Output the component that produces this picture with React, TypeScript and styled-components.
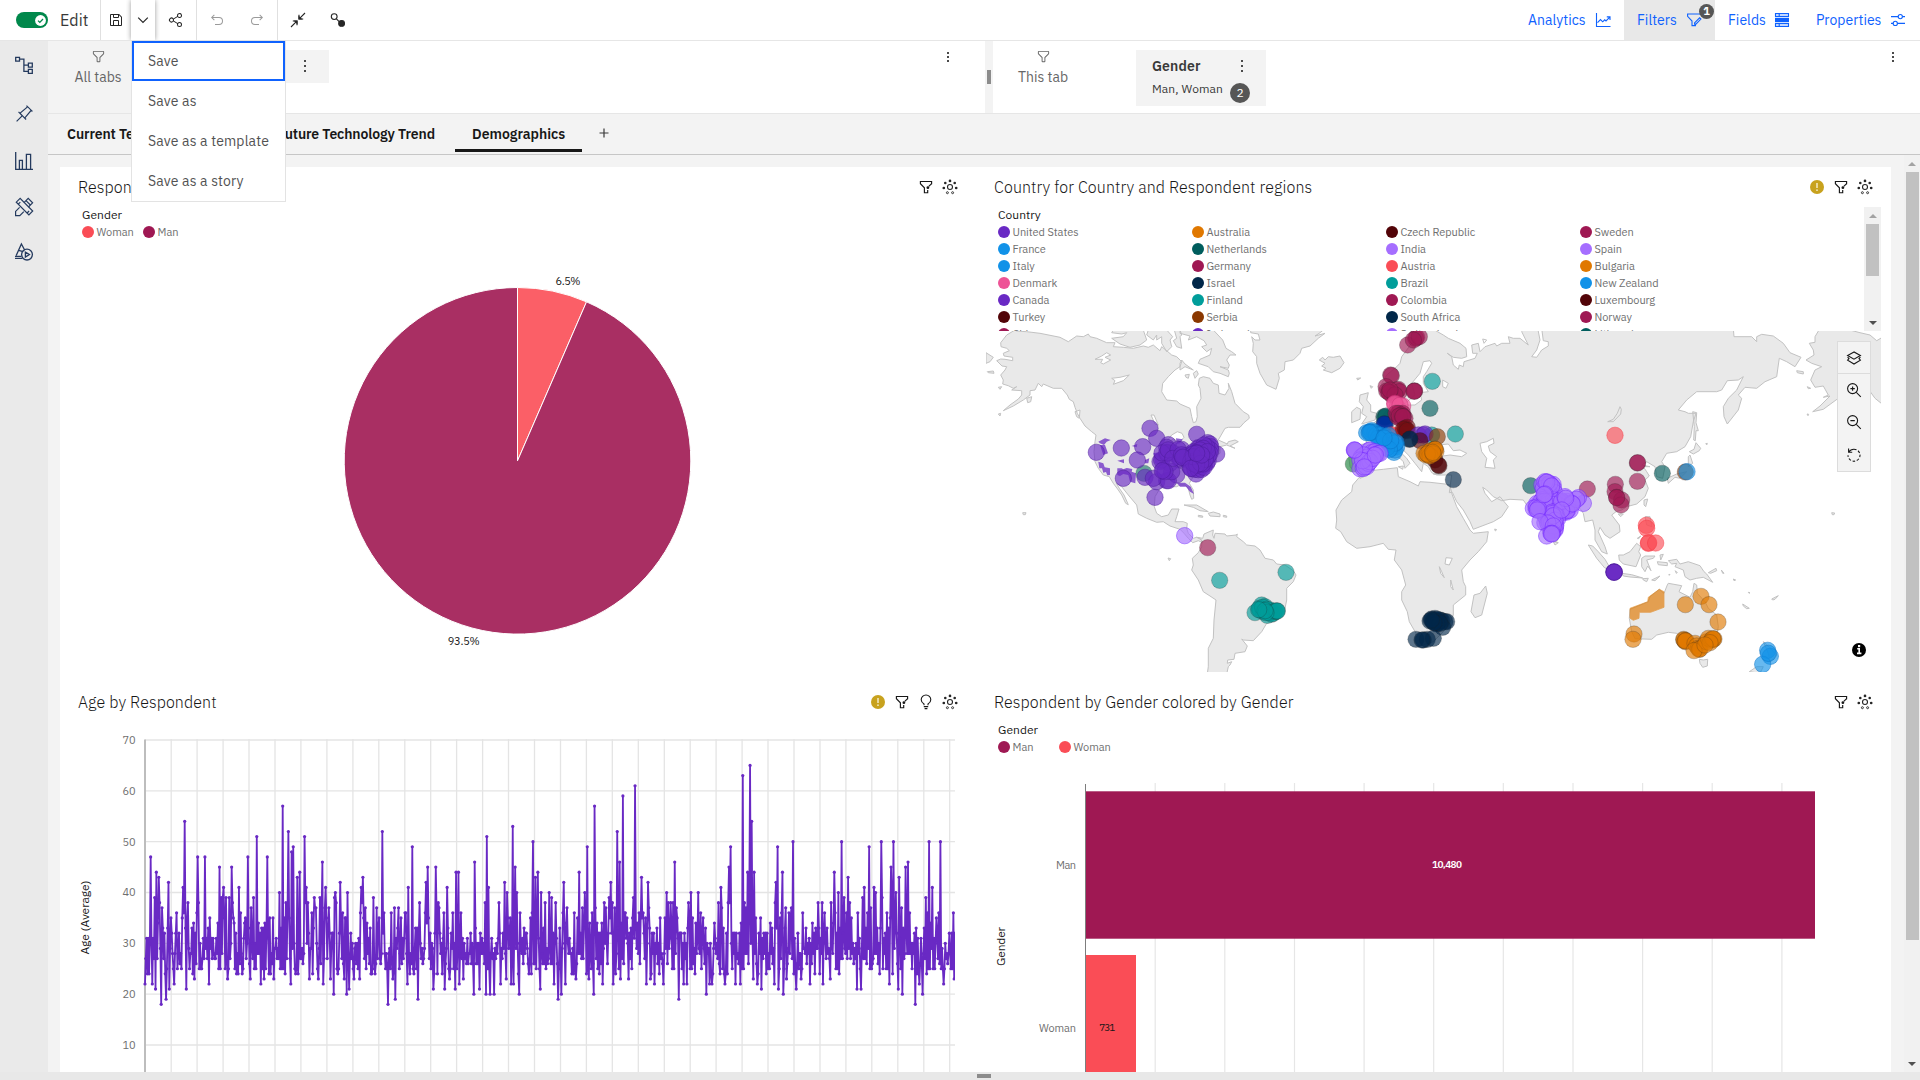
import React from "react";
import styled, { createGlobalStyle, css } from "styled-components";

const GlobalStyle = createGlobalStyle`
  * { box-sizing: border-box; }
  html, body { margin: 0; padding: 0; overflow: hidden; background: #fff; }
  body { font-family: "IBM Plex Sans", Roboto, "Noto Sans", sans-serif; color: #171717; }
  svg { display: block; flex: none; }
`;

/* ---------- shell ---------- */

const Page = styled.div`
  width: 1920px;
  height: 1080px;
  display: flex;
  flex-direction: column;
  overflow: hidden;
`;

const Toolbar = styled.header`
  height: 41px;
  flex: none;
  display: flex;
  background: #fff;
  border-bottom: 1px solid #e6e6e6;
`;

const ToolGroup = styled.div<{ $w: number; $rule?: boolean; $pad?: number }>`
  width: ${(p) => p.$w}px;
  padding-left: ${(p) => p.$pad ?? 0}px;
  display: flex;
  align-items: center;
  border-right: ${(p) => (p.$rule ? "1px solid #e0e0e0" : "0")};
`;

const ToolButton = styled.div<{ $w: number; $dim?: boolean }>`
  width: ${(p) => p.$w}px;
  height: 40px;
  display: flex;
  align-items: center;
  justify-content: center;
  color: ${(p) => (p.$dim ? "#9a9a9a" : "#262626")};
`;

const OpenToggle = styled(ToolButton)`
  position: relative;
  background: #fff;
  box-shadow: 0 0 5px rgba(0, 0, 0, 0.4);
  clip-path: inset(0 -5px 0 -5px);
`;

const Switch = styled.div`
  width: 32px;
  height: 16px;
  border-radius: 8px;
  background: #00884b;
  display: flex;
  align-items: center;
  justify-content: flex-end;
  padding-right: 2px;
`;

const ModeLabel = styled.span`
  margin-left: 12px;
  font-size: 16px;
  letter-spacing: 0.1px;
  color: #393939;
`;

const Spacer = styled.div`
  flex: 1;
`;

const PanelLink = styled.div<{ $w: number; $pl: number; $gap: number; $active?: boolean }>`
  position: relative;
  width: ${(p) => p.$w}px;
  height: 40px;
  padding-left: ${(p) => p.$pl}px;
  display: flex;
  align-items: center;
  gap: ${(p) => p.$gap}px;
  font-size: 14px;
  letter-spacing: 0.03px;
  color: #0f62fe;
  white-space: nowrap;
  background: ${(p) => (p.$active ? "#e8e8e8" : "transparent")};
`;

const CountBadge = styled.span`
  position: absolute;
  right: 1px;
  top: 4px;
  width: 15px;
  height: 15px;
  border-radius: 50%;
  background: #565656;
  color: #fff;
  font-size: 11px;
  font-weight: 700;
  line-height: 15px;
  text-align: center;
`;

const SaveMenu = styled.ul`
  position: absolute;
  left: 0;
  top: 40px;
  z-index: 5;
  width: 155px;
  margin: 0;
  padding: 0;
  list-style: none;
  background: #fff;
  border: 1px solid #e3e3e3;
`;

const SaveMenuItem = styled.li<{ $focus?: boolean }>`
  height: 40px;
  display: flex;
  align-items: center;
  padding-left: ${(p) => (p.$focus ? 14 : 16)}px;
  border: ${(p) => (p.$focus ? "2px solid #0f62fe" : "0")};
  font-size: 14px;
  line-height: 19px;
  letter-spacing: 0.15px;
  color: #525252;
  white-space: nowrap;
`;

const MenuAnchor = styled.div`
  position: relative;
  height: 40px;
`;

const Body = styled.div`
  flex: 1;
  min-height: 0;
  display: flex;
`;

const Sidebar = styled.nav`
  width: 48px;
  flex: none;
  background: #eaeaea;
  color: #243a5e;
  display: flex;
  flex-direction: column;
  align-items: center;
  padding-top: 14px;
  gap: 27px;
`;

const SideItem = styled.div<{ $shift?: number }>`
  height: 20px;
  margin-top: ${(p) => p.$shift ?? 0}px;
  display: flex;
  align-items: center;
`;

const Main = styled.div`
  flex: 1;
  min-width: 0;
  display: flex;
  flex-direction: column;
`;

/* ---------- filter bar ---------- */

const FilterBar = styled.div`
  height: 73px;
  flex: none;
  display: flex;
  border-bottom: 1px solid #e6e6e6;
`;

const FilterSide = styled.div<{ $w: number }>`
  width: ${(p) => p.$w}px;
  display: flex;
  align-items: flex-start;
`;

const ScopeBox = styled.div<{ $shade?: boolean }>`
  width: 100px;
  height: 72px;
  padding-top: 8px;
  display: flex;
  flex-direction: column;
  align-items: center;
  gap: 4px;
  background: ${(p) => (p.$shade ? "#f3f3f3" : "#fff")};
  color: #666;
  font-size: 14px;
  line-height: 18px;
`;

const Chip = styled.div<{ $w: number; $h: number }>`
  width: ${(p) => p.$w}px;
  height: ${(p) => p.$h}px;
  margin: 9px 0 0 43px;
  padding: 6px 20px 0 16px;
  background: #f3f3f3;
  color: #393939;
`;

const ChipRow = styled.div`
  display: flex;
  justify-content: space-between;
  align-items: center;
  height: 20px;
`;

const ChipFooter = styled.div`
  display: flex;
  align-items: flex-start;
  gap: 8px;
`;

const ChipTitle = styled.span`
  margin-top: -1px;
  font-size: 14px;
  font-weight: 600;
  letter-spacing: 0.15px;
`;

const ChipValues = styled.span`
  width: 70px;
  margin-top: 5px;
  font-size: 12px;
  line-height: 16px;
  letter-spacing: 0.1px;
  white-space: nowrap;
`;

const ChipCount = styled.span`
  width: 20px;
  height: 20px;
  flex: none;
  margin-top: 7px;
  border-radius: 50%;
  background: #565656;
  color: #fff;
  font-size: 12px;
  line-height: 20px;
  text-align: center;
`;

const BarMenu = styled.div<{ $r: number }>`
  margin: 11px ${(p) => p.$r}px 0 auto;
`;

const Splitter = styled.div`
  width: 8px;
  background: #f3f3f3;
  display: flex;
  justify-content: center;
  padding-top: 29px;
`;

const SplitGrip = styled.div`
  width: 4px;
  height: 14px;
  background: #8c8c8c;
`;

const Dots = styled.div<{ $gap?: number }>`
  width: 8px;
  display: flex;
  flex-direction: column;
  align-items: center;
  gap: ${(p) => p.$gap ?? 3}px;
  i { width: 2px; height: 2px; background: #4a4a4a; }
`;

/* ---------- tabs ---------- */

const TabBar = styled.div`
  height: 41px;
  flex: none;
  display: flex;
  padding-left: 2px;
  gap: 4px;
  background: #f3f3f3;
  border-bottom: 1px solid #c6c6c6;
`;

const Tab = styled.div<{ $w: number; $on?: boolean }>`
  width: ${(p) => p.$w}px;
  height: 38px;
  padding: 5px 0 ${(p) => (p.$on ? 0 : 3)}px 17px;
  display: flex;
  align-items: center;
  border-bottom: ${(p) => (p.$on ? "3px solid #171717" : "0")};
  font-size: 14px;
  font-weight: 600;
  letter-spacing: ${(p) => (p.$on ? 0 : -0.1)}px;
  white-space: nowrap;
`;

const AddTab = styled.div`
  padding: 13px 0 0 12px;
  color: #393939;
`;

/* ---------- canvas ---------- */

const Canvas = styled.div`
  flex: 1;
  min-height: 0;
  display: flex;
  background: #f3f3f3;
  overflow: hidden;
`;

const Sheet = styled.main`
  width: 1831px;
  margin: 12px 13px 0 12px;
  display: grid;
  grid-template-columns: 916px 915px;
  grid-template-rows: 515px 515px;
  background: #fff;
  overflow: hidden;
`;

const Card = styled.section`
  min-width: 0;
  display: flex;
  flex-direction: column;
  overflow: hidden;
`;

const CardHead = styled.div`
  height: 40px;
  flex: none;
  display: flex;
  align-items: center;
  gap: 8px;
  padding: 0 18px;
`;

const CardTitle = styled.h2`
  flex: 1;
  margin: 0;
  font-size: 16px;
  font-weight: 300;
  letter-spacing: 0.1px;
  white-space: nowrap;
  color: #171717;
`;

const Legend = styled.div`
  padding-left: 22px;
  flex: none;
`;

const LegendTitle = styled.div`
  height: 16px;
  font-size: 12px;
  line-height: 16px;
  letter-spacing: 0.05px;
`;

const LegendRow = styled.div`
  display: flex;
`;

const LegendItem = styled.div<{ $w?: number }>`
  width: ${(p) => (p.$w ? p.$w + "px" : "auto")};
  height: 17px;
  display: flex;
  align-items: center;
  gap: 2.5px;
  font-size: 11px;
  letter-spacing: -0.05px;
  color: #6f6f6f;
  white-space: nowrap;
`;

const Swatch = styled.span<{ $c: string }>`
  width: 12px;
  height: 12px;
  border-radius: 50%;
  background: ${(p) => p.$c};
`;

const ScrollLegend = styled.div`
  height: 124px;
  flex: none;
  display: flex;
  padding-right: 10px;
  overflow: hidden;
`;

const LegendGrid = styled.div`
  display: grid;
  grid-template-columns: repeat(4, 194px);
`;

const Track = styled.div<{ $w: number }>`
  width: ${(p) => p.$w}px;
  flex: none;
  display: flex;
  flex-direction: column;
  align-items: center;
  background: #f1f1f1;
`;

const Thumb = styled.div<{ $h: number }>`
  width: 13px;
  height: ${(p) => p.$h}px;
  background: #c1c1c1;
`;

const Arrow = styled.div<{ $down?: boolean }>`
  height: 17px;
  display: flex;
  align-items: center;
  ${(p) => p.$down && css`margin-top: auto;`}
  &::before {
    content: "";
    border: 4px solid transparent;
    border-top: ${(p) => (p.$down ? "4px solid #505050" : "0")};
    border-bottom: ${(p) => (p.$down ? "0" : "4px solid #a3a3a3")};
  }
`;

const MapFrame = styled.div`
  position: relative;
  width: 895px;
  height: 341px;
  margin-left: 10px;
`;

const MapControls = styled.div`
  position: absolute;
  right: 10px;
  top: 10px;
  width: 34px;
  height: 131px;
  background: #f3f3f3;
  border: 1px solid #dcdcdc;
  color: #171717;
`;

const MapControl = styled.div<{ $rule?: boolean }>`
  height: 32.2px;
  display: flex;
  align-items: center;
  justify-content: center;
  border-bottom: ${(p) => (p.$rule ? "1px solid #dcdcdc" : "0")};
`;

const BottomBar = styled.footer`
  height: 8px;
  flex: none;
  background: #e8e8e8;
  display: flex;
  align-items: center;
  padding: 0 0 0 977px;
  &::before { content: ""; width: 14px; height: 4px; background: #8c8c8c; }
`;

/* ---------- icons ---------- */

const Glyph = ({ s = 16, d, box = 32 }: { s?: number; d: string; box?: number }) => (
  <svg width={s} height={s} viewBox={`0 0 ${box} ${box}`} fill="currentColor"><path d={d} /></svg>
);

const Line = ({ s = 16, box = 16, w = 1, children }: { s?: number; box?: number; w?: number; children: React.ReactNode }) => (
  <svg width={s} height={s} viewBox={`0 0 ${box} ${box}`} fill="none" stroke="currentColor" strokeWidth={w}>{children}</svg>
);

const FILTER_D = "M18,28H14a2,2,0,0,1-2-2V18.41L4.59,11A2,2,0,0,1,4,9.59V6A2,2,0,0,1,6,4H26a2,2,0,0,1,2,2V9.59A2,2,0,0,1,27.41,11L20,18.41V26A2,2,0,0,1,18,28ZM6,6V9.59l8,8V26h4V17.59l8-8V6Z";
const SAVE_D = "M27.71,9.29l-5-5A1,1,0,0,0,22,4H6A2,2,0,0,0,4,6V26a2,2,0,0,0,2,2H26a2,2,0,0,0,2-2V10A1,1,0,0,0,27.71,9.29ZM12,6h8v4H12Zm8,20H12V18h8Zm2,0V18a2,2,0,0,0-2-2H12a2,2,0,0,0-2,2v8H6V6h4v4a2,2,0,0,0,2,2h8a2,2,0,0,0,2-2V6.41l4,4V26Z";
const SHARE_D = "M23,20a5,5,0,0,0-3.89,1.89L11.8,17.32a4.46,4.46,0,0,0,0-2.64l7.31-4.57A5,5,0,1,0,18,7a4.79,4.79,0,0,0,.2,1.32l-7.31,4.57a5,5,0,1,0,0,6.22l7.31,4.57A4.79,4.79,0,0,0,18,25a5,5,0,1,0,5-5ZM23,4a3,3,0,1,1-3,3A3,3,0,0,1,23,4ZM7,19a3,3,0,1,1,3-3A3,3,0,0,1,7,19Zm16,9a3,3,0,1,1,3-3A3,3,0,0,1,23,28Z";
const UNDO_D = "M20,10H7.8149l3.5874-3.5859L10,5,4,11,10,17l1.4023-1.4146L7.8179,12H20a6,6,0,0,1,0,12H12v2h8a8,8,0,0,0,0-16Z";
const REDO_D = "M12,10H24.1851L20.5977,6.4141,22,5,28,11,22,17l-1.4023-1.4146L24.1821,12H12a6,6,0,0,0,0,12h8v2H12a8,8,0,0,1,0-16Z";
const PIN_D = "M28.5858,13.3137,30,11.9,20,2,18.6858,3.415l1.1858,1.1857L8.38,14.3225,6.6641,12.6067,5.25,14l5.6572,5.6773L2,28.5831,3.41,30l8.9111-8.9087L18,26.7482l1.3929-1.414L17.6765,23.618l9.724-11.4895ZM16.2559,22.1973,9.8,15.7419,21.2893,6.0181l4.6926,4.6926Z";

const WarnIcon = () => (
  <svg width="16" height="16" viewBox="0 0 16 16">
    <circle cx="8" cy="8" r="7" fill="#c8a21e" />
    <path d="M8 4v5" stroke="#f2e7bd" strokeWidth="1.6" />
    <rect x="7.2" y="10.4" width="1.6" height="1.6" fill="#f2e7bd" />
  </svg>
);

const FunnelDotIcon = () => (
  <svg width="16" height="16" viewBox="0 0 16 16" fill="none" stroke="#171717" strokeWidth="1.15">
    <path d="M13.6 5.2V2.5H2.4v2.2L6.4 8.8v4.9h3.3V11" />
    <path d="M13.6 4.6L10.8 7.4" />
    <circle cx="9.9" cy="8.7" r="1.4" fill="#171717" stroke="none" />
  </svg>
);

const GearIcon = () => (
  <svg width="16" height="16" viewBox="0 0 16 16" fill="none" stroke="#262626" strokeWidth="1.1">
    <circle cx="8" cy="8" r="2.5" />
    <g fill="#262626" stroke="none">
      <circle cx="8" cy="1.9" r="1.35" />
      <circle cx="3.3" cy="4" r="1.3" />
      <circle cx="12.7" cy="4" r="1.3" />
      <circle cx="1.8" cy="9" r="1.35" />
      <circle cx="14.2" cy="9" r="1.35" />
    </g>
    <circle cx="5.4" cy="13.7" r="1" strokeWidth="0.9" />
    <circle cx="10.6" cy="13.7" r="1" strokeWidth="0.9" />
  </svg>
);

const BulbIcon = () => (
  <Line w={1.1}>
    <path d="M6 11.3V10C4.3 9 3.2 7.6 3.2 5.8a4.8 4.8 0 0 1 9.6 0C12.8 7.6 11.7 9 10 10v1.3" />
    <path d="M5.8 12.6h4.4M6.6 14.6h2.8" />
  </Line>
);

const Kebab = ({ gap }: { gap?: number }) => <Dots $gap={gap}><i /><i /><i /></Dots>;

/* ---------- map data ---------- */

/* Each sheet of the digitised outline has its own origin, three units per pixel. */
const ORIGIN: Record<string, [number, number]> = { A: [980, 320], B: [1320, 320], C: [1580, 400], D: [1440, 150] };

const outline = (text: string) => {
  let o = ORIGIN.A;
  const pts: string[] = [];
  text.trim().split(/\s+/).forEach((t) => {
    if (ORIGIN[t]) { o = ORIGIN[t]; return; }
    const [x, y] = t.split(",").map(Number);
    pts.push(`${(o[0] + x / 3).toFixed(1)},${(o[1] + y / 3).toFixed(1)}`);
  });
  return "M" + pts.join("L") + "Z";
};

const LAND = [
  "A 105,30 80,45 62,68 63,80 80,85 88,92 70,100 72,108 98,112 98,122 75,118 62,117 50,122 66,138 80,140 75,150 62,165 70,180 68,192 85,197 100,205 110,200 95,210 125,212 125,225 115,237 90,255 70,272 100,258 130,240 150,225 150,212 165,210 175,190 185,200 190,192 220,205 245,205 262,225 268,238 280,245 285,262 292,280 300,295 315,318 335,335 348,345 345,365 342,395 345,425 355,445 370,465 388,470 400,490 415,510 425,525 437,550 445,554 432,525 418,505 408,488 425,500 445,525 470,555 475,582 500,595 530,607 550,605 570,618 600,628 612,640 625,655 638,668 655,662 668,668 660,655 650,652 640,655 625,640 620,625 622,610 610,605 585,605 590,590 597,567 575,567 565,585 545,590 530,580 523,560 525,530 540,505 560,500 590,500 600,495 615,495 625,505 630,525 635,538 641,535 640,510 628,490 640,470 665,445 700,430 705,410 720,400 720,380 740,375 765,385 750,378 775,365 765,360 745,365 742,372 715,360 735,325 745,322 780,322 792,308 808,295 806,285 790,275 765,250 755,215 745,190 747,205 735,225 717,220 715,195 700,190 690,175 670,170 658,175 655,195 660,205 663,235 650,260 652,290 648,305 640,308 635,290 630,265 600,252 590,243 560,240 545,215 548,190 565,170 585,150 600,140 605,125 590,110 575,105 560,92 545,80 540,92 520,75 505,82 490,78 460,85 430,82 400,80 405,68 380,68 350,55 330,50 325,42 310,50 290,48 265,65 240,52 180,40 140,35 110,33",
  "A 395,38 425,42 440,38 430,50 395,55 420,72 450,82 480,75 500,60 490,30 400,30",
  "A 505,30 500,45 520,60 530,45 530,60 545,50 545,70 560,95 575,80 570,60 578,50 560,30",
  "A 583,30 590,55 580,62 590,80 605,85 600,50 605,45 600,30",
  "A 600,30 600,40 630,48 625,60 650,50 672,62 680,75 665,80 680,95 695,85 690,105 660,118 655,130 685,140 700,155 720,160 745,170 748,160 745,150 720,140 745,145 748,135 740,120 750,105 768,105 755,95 738,85 728,60 700,30",
  "A 605,120 615,132 640,150 615,140 600,150 600,130",
  "A 615,165 628,163 625,175 618,172", "A 640,160 650,152 655,162 645,175",
  "A 812,30 812,38 835,42 840,60 825,60 815,50 820,70 818,95 830,110 830,130 840,160 860,195 888,208 898,175 895,160 913,150 915,125 940,120 960,100 965,85 990,78 1015,55 1035,40 1005,48 1020,38 1030,30",
  "A 1018,120 1028,112 1035,120 1045,110 1060,112 1080,108 1092,128 1080,145 1055,158 1030,150 1038,145 1025,138 1035,130",
  "A 18,98 40,112 30,125 18,130", "A 22,155 40,153 42,160 25,158", "A 55,202 65,200 60,208", "A 55,282 62,280 60,288",
  "A 140,235 155,230 152,245 143,248", "A 285,275 300,270 298,295 290,290",
  "A 1140,225 1165,218 1160,240 1172,255 1172,275 1190,280 1185,300 1145,312 1160,290 1145,280 1150,260 1138,245",
  "A 1115,275 1130,262 1142,268 1140,298 1115,308", "A 1130,175 1142,174 1133,180", "A 1170,197 1178,200 1174,205",
  "A 612,555 650,555 685,575 660,572 640,562", "A 685,580 700,576 720,582 720,590 690,588", "A 730,586 740,588 740,592 730,590", "A 655,586 668,588 668,592 655,590",
  "A 128,578 138,578 136,584 130,584", "A 564,714 572,716 568,722", "C 755,338 764,339 762,344 757,344",
  "A 650,652 668,655 672,642 700,630 698,645 702,655 705,640 735,642 740,648 768,645 772,642 770,650 790,665 800,675 825,678 840,690 855,715 880,720 890,732 915,735 940,752 948,765 940,785 920,805 920,840 912,880 885,905 860,910 845,935 820,962 790,960 785,957 802,978 795,995 765,1000 762,1018 743,1020 742,1030 755,1025 750,1035 745,1040 740,1062 682,1062 685,1040 685,985 700,955 702,900 708,840 690,828 670,815 655,780 635,750 640,735 637,715 655,698 665,680 665,660",
  "B 118,472 150,452 190,448 232,443 235,470 270,485 295,498 300,485 330,487 375,492 390,495 395,520 410,560 430,595 450,630 460,640 505,635 500,665 475,695 450,720 425,750 430,785 437,800 437,825 400,855 400,885 385,920 370,935 340,965 300,978 285,965 288,940 268,905 262,875 245,840 245,815 257,795 245,750 223,720 228,690 205,688 190,670 150,680 110,685 80,665 62,635 47,625 50,600 48,570 65,540 95,515 98,495",
  "B 497,798 502,820 485,885 465,893 453,875 462,825 480,820",
  `B 112,462 90,440 85,400 90,375 140,372 135,345 120,325 160,310 185,290 205,265 215,240 215,215 190,215 185,190 200,165 230,140 240,130 245,110 260,90 290,50 300,28 340,28 370,45 385,55 420,70 438,85 440,110 425,115 400,112 382,100 395,110 400,135 415,148 418,135 430,140 432,125 465,115 472,100 458,100 455,75 475,70 480,95 495,80 525,70 530,78 545,70 570,70 565,50 580,55 600,55 625,75 605,35 612,28
   D 880,535 882,560 935,560 950,575 950,560 965,553 1000,558 1030,580 1050,608 1083,622 1065,650 1040,635 1018,625 1015,645 1010,680 975,695 950,715 915,712 895,735 905,745 895,780 862,822 852,800 850,770 865,745 890,720 910,680 895,690 862,692 845,720 830,725 770,725 740,750 715,780 735,785 745,790 768,790 760,815 752,860 735,890 710,905 680,910 665,935 675,950 668,985 650,980 645,950 620,935 605,945 630,950
   C 190,200 200,215 208,228 195,240 205,265 195,290 170,312 140,320 125,330 108,335 95,345 118,375 120,395 90,415 75,405 60,382 55,395 75,440 82,462 65,455 45,420 45,390 38,360 15,365 10,340 0,325
   B 770,560 740,580 725,610 720,645 710,665 690,660 670,640 655,600 640,580 620,555 610,540 570,538 545,542 520,530 500,510 488,502 495,520 515,545 540,530 565,560 545,590 520,605 460,628 450,605 430,570 410,545 397,517 388,518 395,465 350,465 335,458 325,440 310,430 305,455 285,430 265,405 235,375 225,380 260,415 270,430 255,445 250,425 215,390 195,415 175,430 145,465 120,475`,
  "B 340,462 365,460 360,464", "B 235,440 250,438 248,448", "B 700,665 715,668 705,675", "B 524,627 530,629 526,633",
  "C 348,128 362,145 358,152 340,162 328,155 342,148", "C 330,165 338,190 325,200 325,170", "C 262,235 290,222 320,215 300,235 285,232 265,250",
  "C 338,35 350,38 348,68 355,92 348,92 346,122 341,120 343,80",
  "C 192,300 203,297 197,320 192,315", "C 115,342 130,342 122,350", "C 377,131 382,130 381,134",
  "C 25,435 38,438 55,455 75,478 88,500 75,505 50,475", "C 125,520 155,524 188,534 150,531 130,528", "C 188,536 205,535 200,545 190,540", "C 215,540 240,528 225,542",
  "C 116,465 130,465 150,455 170,430 182,440 176,455 182,465 168,500 130,492 118,480",
  "C 185,475 195,468 225,468 220,475 200,480 213,512 203,498 195,515 185,500", "C 240,465 250,463 242,480", "C 232,485 262,488 262,497 235,494",
  "C 265,482 290,478 300,492 325,485 360,497 372,515 380,522 398,547 370,532 350,535 330,540 315,530 310,510 285,500 290,490 275,492", "C 385,518 408,505 410,512 392,520", "C 424,510 432,520 428,520", "C 460,537 467,540 462,542",
  "C 488,612 508,625 500,626 490,618", "C 575,597 595,587 585,598 578,600", "C 505,577 510,578 507,580", "C 172,415 182,408 176,416", "C 195,350 210,350 216,380 200,375", "C 266,524 270,523 268,526", "C 286,512 292,518 289,520",
  "C 150,628 205,605 210,590 238,568 252,580 262,555 265,550 305,557 297,575 330,592 338,575 342,550 350,555 352,580 375,605 385,625 410,645 415,680 410,710 395,735 370,745 340,745 325,720 300,712 290,700 265,697 230,705 215,718 165,716 155,695 148,655",
  "C 358,778 370,780 383,778 382,798 368,802 360,790", "C 550,725 562,735 590,765 570,785 565,760", "C 508,815 530,800 550,800 540,820",
  "D 1140,535 1125,560 1125,577 1108,580 1120,600 1122,615 1098,630 1115,640 1145,650 1125,660 1112,690 1125,712 1150,708 1165,735 1150,742 1170,738 1140,768 1118,785 1150,778 1195,745 1240,700 1280,710 1305,745 1330,765 1330,560 1310,572 1290,555 1260,548 1210,535",
  "D 1070,662 1090,665 1090,672 1072,668", "D 1102,710 1112,715 1105,716", "D 1101,792 1106,793 1104,797",
].map(outline).join("");

const WATER = [
  "A 345,118 365,108 380,98 392,105 375,112 392,120 370,132 362,128 368,118",
  "A 395,175 420,172 448,165 430,182 400,193 405,182",
  "A 556,368 575,345 592,335 606,340 612,352 600,365 580,358",
  "A 513,285 522,285 535,315 525,312",
  "B 310,125 330,122 335,130 320,155 310,170 310,190 325,215 300,218 305,240 285,255 265,255 250,255 285,225 275,190 300,160",
  "B 355,375 385,372 400,392 420,390 440,400 425,410 390,405 355,410",
  "B 480,370 500,365 520,355 522,370 505,378 510,395 530,410 520,420 525,445 495,442 500,415 485,395",
  "B 368,180 385,190 378,205 368,200", "B 378,713 397,715 388,735 375,732", "B 358,740 365,755 373,773 362,760", "B 392,780 400,810 392,800", "B 488,57 500,60 492,70",
  "D 293,535 300,570 290,600 275,620 290,622 305,600 325,588 325,575 310,572 305,535",
].map(outline).join("");

const AUS_REGION = outline("C 150,625 203,605 205,592 238,568 252,575 252,622 212,637 178,637 177,655 160,661 150,655");

const US_REGIONS = [
  "A 375,355 392,360 380,365 372,375 360,370 355,365", "A 360,375 375,375 384,400 370,405", "A 355,425 370,430 374,442 390,445 390,465 382,466 378,456 370,458 366,445 358,445",
  "A 412,422 432,418 432,430", "A 412,445 425,445 430,448 440,444 457,447 455,455 468,460 466,490 450,485 445,465 430,462 420,468 412,465", "A 495,420 508,415 505,430 495,430", "A 590,488 615,488 632,500 642,522 630,515 618,500 600,500",
  "A 455,378 472,372 470,382", "A 588,355 608,358 600,370 590,372", "A 520,400 545,395 545,440 525,430",
].map(outline).join("");

type Dot = [number, number, string];

let seed = 7;
const rand = () => {
  seed = (seed * 1103515245 + 12345) % 2147483648;
  return seed / 2147483648;
};

const at = (sheet: string, color: string, text: string): Dot[] =>
  text.trim().split(/\s+/).map((t) => {
    const [x, y] = t.split(",").map(Number);
    return [ORIGIN[sheet][0] + x / 3, ORIGIN[sheet][1] + y / 3, color];
  });

const cluster = (sheet: string, color: string, cx: number, cy: number, rx: number, ry: number, n: number): Dot[] =>
  Array.from({ length: n }, () => {
    const a = rand() * Math.PI * 2;
    const r = Math.sqrt(rand());
    return [ORIGIN[sheet][0] + (cx + Math.cos(a) * r * rx) / 3, ORIGIN[sheet][1] + (cy + Math.sin(a) * r * ry) / 3, color] as Dot;
  });

const STROKE: Record<string, string> = {
  "#a56eff": "#6a1cff", "#fa4d56": "#f5303b", "#ee5396": "#c92c72", "#1192e8": "#0a6fc2", "#6929c4": "#4a1a96",
};

const DOTS: Dot[] = [
  ...at("A", "#1c7a6c", "492,460"),
  ...at("A", "#6929c4", "349,397 424,384 488,380 510,325 530,355 472,420 430,475 495,472 525,532 650,343 565,374 560,382 605,388 530,485 560,482 590,465 540,425 550,450 570,430 520,475 580,400 648,462 565,482 545,420 600,420 575,455 560,400 710,402"),
  ...cluster("A", "#6929c4", 575, 405, 30, 24, 6),
  ...cluster("A", "#6929c4", 612, 412, 14, 16, 6),
  ...cluster("A", "#6929c4", 660, 410, 30, 32, 26),
  ...at("A", "#6929c4", "683,368 690,372 692,380 692,390 690,400 685,408 680,380 672,375 670,385 660,390 650,398 640,402 636,412 632,425 630,440 635,446 645,448 655,449 665,448 672,442 668,432 676,418 682,395 640,430 650,435 640,410 662,430 555,455 547,452 608,412 632,445 665,405 650,400"),
  ...at("A", "#a56eff", "614,647"),
  ...at("A", "#9f1853", "683,683"),
  ...at("A", "#009d9a", "719,781 918,757 825,878 862,886 845,855 855,860 838,865 870,870 880,880 850,875 840,870 848,862 860,868 866,878 874,882 884,874 888,873 892,873 891,873 858,878 855,872 836,869"),
  ...at("B", "#198038", "100,432"),
  ...at("B", "#005d5d", "330,265 632,497 192,290 195,292 198,288"),
  ...at("B", "#009d9a", "337,184 406,342 335,345"),
  ...at("B", "#9f1853", "263,75 287,55 290,52 298,50 280,60 212,165 214,167 198,200 205,215 215,225 232,210 235,208 238,215 200,213 208,218 225,225 210,210 283,213 284,213 282,214"),
  ...at("B", "#002d9c", "192,312 196,314 194,312"),
  ...at("B", "#fa4d56", "215,345 225,350 235,345"),
  ...at("B", "#ee5396", "232,262 248,258 225,250 224,252 240,256"),
  ...at("B", "#9f1853", "232,290 240,295 248,280 255,295 235,280 228,280 245,285 238,288 250,290 248,290"),
  ...at("B", "#750e13", "255,325 258,330 262,322 250,328 262,332"),
  ...at("B", "#6929c4", "295,345 310,345 315,342"),
  ...at("B", "#8a3800", "352,350"),
  ...at("B", "#520408", "300,362 345,420 355,435 357,437"),
  ...at("B", "#012749", "268,358 270,357 400,479"),
  ...at("B", "#1192e8", "140,338 150,335 155,332 165,338 170,345 180,345 185,355 195,350 205,346 200,370 205,380 215,385 222,378 230,380 222,397 225,390 210,365 190,365 185,370 228,367 225,370 195,375 200,384 208,388 180,360 175,355 152,337 148,338 212,362 192,354"),
  ...at("B", "#a56eff", "103,390 106,392 125,410 145,392 150,390 155,398 165,395 172,402 180,400 162,405 145,420 140,412 132,405 120,420 120,446 130,445 140,440 145,430 150,425 158,415 128,422 104,390 133,441 166,405"),
  ...at("B", "#e07800", "312,400 318,405 325,404 332,392 340,390 346,388 348,394 335,400 328,395 345,388 330,408 322,402 340,402 338,397"),
  ...at("B", "#9f1853", "802,507"),
  ...cluster("B", "#a56eff", 685, 505, 24, 20, 22),
  ...cluster("B", "#a56eff", 700, 560, 55, 28, 60),
  ...cluster("B", "#a56eff", 692, 610, 24, 34, 22),
  ...at("B", "#a56eff", "675,485 680,487 695,498 790,550 775,533 770,538 755,550 757,552 640,565 650,562 655,565 652,570 660,605 680,648 700,618 693,640 697,640 695,642 735,530 737,535 675,522 672,524 725,570"),
  ...at("B", "#012749", "335,897 338,902 345,900 360,900 365,902 375,905 380,905 350,910 368,922 345,895 330,903 355,905 348,905 340,905 352,898 350,912 360,910 342,908 334,900 288,958 310,960 322,958 340,955 306,960"),
  ...at("C", "#fa4d56", "105,106 199,376 200,385 205,430 206,428 227,429"),
  ...at("C", "#9f1853", "172,189 173,188 172,244 106,253 105,275 110,292 125,300 123,315 110,293"),
  ...at("C", "#005d5d", "247,220"),
  ...at("C", "#8a3800", "316,216"),
  ...at("C", "#1192e8", "321,215 563,751 571,769 548,793 565,760"),
  ...at("C", "#6929c4", "102,516 102,516 103,516 102,517"),
  ...at("C", "#e07800", "363,589 387,614 316,614 414,666 162,702 159,718 311,718 314,722 316,725 312,720 318,722 316,723 345,730 350,738 355,745 358,748 360,747 342,752 380,725 385,715 395,720 400,718 402,717 398,716 390,728 375,735"),
];

/* ---------- map legend ---------- */

const COUNTRIES: [string, string][] = [
  ["United States", "#6929c4"], ["Australia", "#e07800"], ["Czech Republic", "#520408"], ["Sweden", "#9f1853"],
  ["France", "#1192e8"], ["Netherlands", "#005d5d"], ["India", "#a56eff"], ["Spain", "#a56eff"],
  ["Italy", "#1192e8"], ["Germany", "#9f1853"], ["Austria", "#fa4d56"], ["Bulgaria", "#e07800"],
  ["Denmark", "#ee5396"], ["Israel", "#012749"], ["Brazil", "#009d9a"], ["New Zealand", "#1192e8"],
  ["Canada", "#6929c4"], ["Finland", "#009d9a"], ["Colombia", "#9f1853"], ["Luxembourg", "#520408"],
  ["Turkey", "#520408"], ["Serbia", "#8a3800"], ["South Africa", "#012749"], ["Norway", "#9f1853"],
  ["China", "#9f1853"], ["Indonesia", "#6929c4"], ["Switzerland", "#a56eff"], ["Lithuania", "#005d5d"],
];

/* ---------- age series ---------- */

const parsePairs = (origin: number, text: string) =>
  text.trim().split(/\s+/).map((t) => {
    const [x, v] = t.split(":").map(Number);
    return [Math.round((x / 3 + origin - 145) / 0.81), v] as [number, number];
  });

const EXTREMES = [
  ...parsePairs(60, `271:47 289:44 296:43 325:42 374:54 369:41 383:38 349:36 306:37 335:32 400:34 412:47 434:47 449:35 478:45 490:41 498:39 515:45 521:35 537:41 554:34 563:47 573:37 581:39 590:51 615:34 622:47 639:35 658:40 668:57 677:38 685:52 694:48 699:49 712:43 719:44 733:51 738:41 743:38 762:39 767:37 787:46 797:41 806:37 816:32 826:40 840:42 848:36 856:35 862:40 886:30 903:41 909:43 920:34 931:33 940:39 949:37 957:35 967:52 972:36 993:36 1004:37 1015:37 1023:35 1036:36 1045:41 1057:49 1066:33 1079:38 1098:42 1104:45 1127:45 1137:37 1151:36 1161:41 1178:36 1188:44 1196:44 1203:36 1232:32 1245:46 1268:28 1280:51 1286:41 1316:38 1334:42 1341:40 1350:35 1358:53 1366:45 1371:40 1380:36 1399:32 1419:50 1426:43 1434:44
  255:22 277:22 286:21 303:18 318:19 327:21 342:22 352:25 379:21 403:23 425:25 447:22 465:27 503:23 530:24 547:24 571:23 602:22 612:23 627:24 641:23 660:25 692:22 707:24 722:27 748:23 774:23 790:22 811:23 821:20 834:24 853:23 860:20 867:21 881:23 899:23 935:24 945:24 960:27 984:18 998:23 1006:19 1018:25 1042:22 1074:19 1062:24 1092:27 1120:21 1154:21 1169:23 1186:21 1198:22 1210:23 1241:20 1258:21 1278:20 1290:20 1302:20 1322:22 1338:23 1354:22 1361:22 1378:20 1408:24`),
  ...parsePairs(520, `64:40 76:38 88:40 94:39 107:38 120:33 131:42 141:37 163:36 178:44 187:37 195:40 202:49 210:34 224:57 235:32 246:34 253:38 258:37 268:39 272:42 278:38 285:37 292:52 300:46 309:59 315:36 321:35 334:33 341:39 346:61 358:36 365:43 370:36 378:33 385:42 390:33 400:32 420:35 431:42 440:40 452:38 465:46 471:35 482:32 505:38 514:40 527:34 535:40 542:36 550:35 557:33 575:34 583:34 603:41 610:33 626:45 633:49 649:32 662:57 669:63 682:44 691:65 694:54 703:44 708:35 722:35 740:35 751:34 767:42 773:49 788:44 797:37 806:36 811:35 820:50 833:32 847:36 858:33 878:34 887:33 895:38 907:38 914:36 920:33 934:38 944:44 956:40 966:50 971:39 985:43 994:35 1013:36 1028:39 1034:41 1048:49 1056:46 1062:41 1068:40 1078:37 1085:50 1102:36 1114:45 1121:50 1128:40 1138:43 1156:45 1163:46 1168:36 1189:33 1204:31 1217:39 1228:50 1236:41 1250:35 1262:50 1270:35 1288:32 1300:36
  27:24 42:26 61:21 85:27 103:22 114:19 125:20 137:22 155:24 168:23 184:27 207:23 222:20 242:26 249:22 280:22 302:23 325:23 355:28 380:22 392:23 404:22 422:27 429:22 443:26 477:19 490:22 500:22 525:24 545:25 559:20 568:22 577:22 600:24 616:22 647:22 660:22 685:26 699:23 711:22 725:21 738:24 762:22 776:21 791:20 800:23 828:21 843:23 871:22 898:24 910:22 930:23 948:25 963:27 992:27 1010:21 1022:21 1058:26 1080:24 1107:22 1136:21 1146:20 1185:18 1197:22 1209:20 1221:24 1240:25 1272:22 1283:26 1303:23`),
];

const AGES: number[] = (() => {
  const fixed = new Map(EXTREMES);
  const out: number[] = [];
  for (let i = 0; i <= 1000; i++) {
    const f = fixed.get(i);
    if (f !== undefined) out.push(f);
    else {
      const near = [1, 2, 3].some((k) => (fixed.get(i - k) ?? 0) > 38 || (fixed.get(i + k) ?? 0) > 38);
      out.push(Math.round(i % 2 ? 24 + rand() * 5 : 28 + rand() * (near ? 11 : 5)));
    }
  }
  return out;
})();

const ageY = (v: number) => 740 + (70 - v) * 5.083;
const AGE_PATH = "M" + AGES.map((v, i) => `${(145 + i * 0.81).toFixed(2)},${ageY(v).toFixed(1)}`).join("L");

/* ---------- charts ---------- */

const ChartText = styled.text<{ $c?: string; $size?: number; $bold?: boolean }>`
  font-family: "IBM Plex Sans", Roboto, "Noto Sans", sans-serif;
  font-size: ${(p) => p.$size ?? 11}px;
  font-weight: ${(p) => (p.$bold ? 600 : 400)};
  fill: ${(p) => p.$c ?? "#6f6f6f"};
`;

const PieChart = () => {
  const a = (0.0652 * 360 * Math.PI) / 180;
  const cx = 517.5, cy = 460.8, r = 173.3;
  const ex = cx + Math.sin(a) * r, ey = cy - Math.cos(a) * r;
  return (
    <svg width="916" height="431" viewBox="60 240 916 431">
      <g stroke="#fff" strokeWidth="1">
        <path d={`M${cx},${cy}L${cx},${cy - r}A${r},${r} 0 0 1 ${ex},${ey}Z`} fill="#fb5f67" />
        <path d={`M${cx},${cy}L${ex},${ey}A${r},${r} 0 1 1 ${cx},${cy - r}Z`} fill="#a92f63" />
      </g>
      <ChartText $c="#171717" x="568" y="285" textAnchor="middle" textLength="25">6.5%</ChartText>
      <ChartText $c="#171717" x="463.7" y="645" textAnchor="middle" textLength="32">93.5%</ChartText>
    </svg>
  );
};

const AgeChart = () => (
  <svg width="895" height="350" viewBox="60 722 895 350">
    <g stroke="#e4e4e4">
      {Array.from({ length: 31 }, (_, i) => <path key={i} d={`M${(171.2 + i * 25.95).toFixed(1)},739V1072`} strokeWidth="1.3" />)}
      {[70, 60, 50, 40, 30, 20, 10].map((v) => <path key={v} d={`M145,${ageY(v)}H955`} strokeWidth="1.3" />)}
    </g>
    <path d="M145,739.5V1072" stroke="#bdbdbd" strokeWidth="2" />
    {[70, 60, 50, 40, 30, 20, 10].map((v) => (
      <ChartText key={v} x="135.5" y={ageY(v) + 4} textAnchor="end" textLength="13">{v}</ChartText>
    ))}
    <path d={AGE_PATH} fill="none" stroke="#6929c4" strokeWidth="1.8" strokeLinejoin="round" />
    {AGES.map((v, i) => <circle key={i} cx={145 + i * 0.81} cy={ageY(v)} r="1.6" fill="#6929c4" />)}
    <ChartText $c="#171717" $size={12} transform="translate(89,917.5) rotate(-90)" textAnchor="middle" textLength="74">Age (Average)</ChartText>
  </svg>
);

const GenderChart = () => (
  <svg width="915" height="331" viewBox="976 755 915 331">
    <g stroke="#e6e6e6" strokeWidth="1.2">
      {Array.from({ length: 10 }, (_, i) => <path key={i} d={`M${(1155.2 + i * 69.63).toFixed(1)},783V1087`} />)}
    </g>
    <rect x="1086" y="791.3" width="729" height="147.4" fill="#9f1853" />
    <rect x="1086" y="955" width="50" height="140" fill="#fa4d56" />
    <path d="M1085.5,784V1087" stroke="#7d7d7d" />
    <ChartText x="1076" y="869" textAnchor="end" textLength="20">Man</ChartText>
    <ChartText x="1076" y="1032" textAnchor="end" textLength="37">Woman</ChartText>
    <ChartText $c="#fff" $bold $size={10} x="1447" y="868" textAnchor="middle" textLength="30">10,480</ChartText>
    <ChartText $c="#171717" $size={10} x="1107.3" y="1031" textAnchor="middle" textLength="16">731</ChartText>
    <ChartText $c="#171717" $size={12} transform="translate(1005,946.5) rotate(-90)" textAnchor="middle" textLength="39">Gender</ChartText>
  </svg>
);

const WorldMap = () => (
  <svg width="895" height="341" viewBox="986 331 895 341">
    <path d={LAND} fill="#e9e9e9" stroke="#c2c2c2" strokeWidth="1" strokeLinejoin="round" />
    <path d={WATER} fill="#fff" stroke="#c2c2c2" strokeWidth="1" strokeLinejoin="round" />
    <path d={outline("C 83,65 100,58 112,40 120,20 124,28 122,42 100,65")} fill="#e9e9e9" stroke="#c2c2c2" strokeWidth="1" />
    <path d={US_REGIONS} fill="#6929c4" opacity="0.75" />
    <path d={AUS_REGION} fill="#e07800" opacity="0.65" stroke="#e07800" strokeWidth="0.8" />
    {DOTS.map(([x, y, c], i) => (
      <circle key={i} cx={x} cy={y} r="8.2" fill={c} fillOpacity="0.64" stroke={STROKE[c] ?? "#222"} strokeOpacity={STROKE[c] ? 0.55 : 0.28} strokeWidth="0.8" />
    ))}
    <circle cx="1859" cy="650" r="7" fill="#000" />
    <path d="M1857.2,648.8h2v4.4M1857,653.4h4.4" stroke="#fff" strokeWidth="1.6" fill="none" />
    <rect x="1858" y="645" width="2.2" height="2.2" fill="#fff" />
  </svg>
);

export default function App() {
  return (
    <>
      <GlobalStyle />
      <Page>
        <Toolbar>
          <ToolGroup $w={101} $pad={16} $rule>
            <Switch>
              <svg width="11" height="11" viewBox="0 0 11 11">
                <circle cx="5.5" cy="5.5" r="5.4" fill="#fff" />
                <path d="M3 5.6l1.8 1.8 3.2-3.4" fill="none" stroke="#00884b" strokeWidth="1.3" />
              </svg>
            </Switch>
            <ModeLabel>Edit</ModeLabel>
          </ToolGroup>
          <ToolGroup $w={96} $rule>
            <ToolButton $w={30}><Glyph d={SAVE_D} /></ToolButton>
            <MenuAnchor>
              <OpenToggle $w={24}>
                <Line w={1.2}><path d="M3.2 5.7L8 10.5l4.8-4.8" /></Line>
              </OpenToggle>
              <SaveMenu>
                <SaveMenuItem $focus>Save</SaveMenuItem>
                <SaveMenuItem>Save as</SaveMenuItem>
                <SaveMenuItem>Save as a template</SaveMenuItem>
                <SaveMenuItem>Save as a story</SaveMenuItem>
              </SaveMenu>
            </MenuAnchor>
            <ToolButton $w={41}><Glyph s={16} d={SHARE_D} /></ToolButton>
          </ToolGroup>
          <ToolGroup $w={81} $rule>
            <ToolButton $w={40} $dim><Glyph s={16} d={UNDO_D} /></ToolButton>
            <ToolButton $w={40} $dim><Glyph s={16} d={REDO_D} /></ToolButton>
          </ToolGroup>
          <ToolGroup $w={80}>
            <ToolButton $w={40}>
              <Line w={1.1}>
                <path d="M15 1L9.4 6.6M1 15l5.6-5.6" />
                <path d="M9 2.8V7h4.2M7 13.2V9H2.8" />
                <path d="M9 4.8V7h2.2zM7 11.2V9H4.8z" fill="currentColor" />
              </Line>
            </ToolButton>
            <ToolButton $w={40}>
              <Line w={1.1}>
                <circle cx="4.2" cy="4.6" r="2.9" />
                <path d="M6.4 6.8l4 4" />
                <circle cx="11.6" cy="11.4" r="2.9" fill="currentColor" />
              </Line>
            </ToolButton>
          </ToolGroup>
          <Spacer />
          <PanelLink $w={96} $pl={0} $gap={9}>
            Analytics
            <Line w={1.1}><path d="M1.5 1v13.5H15.5M2.5 10.6l3-3 2.2 2.2 2-2L11 9l3.8-3.8M11.8 4.9h3.2v3.2" /></Line>
          </PanelLink>
          <PanelLink $w={91} $pl={13} $gap={9} $active>
            Filters
            <Line w={1.1}><path d="M14.4 3V2H1.6v2.4L6 9v4.6h3.4V12" /><path d="M8.6 10.8l5-5 1.3 1.3-5 5H8.6z" /></Line>
            <CountBadge>1</CountBadge>
          </PanelLink>
          <PanelLink $w={89} $pl={13} $gap={8}>
            Fields
            <Line w={1.1}>
              <path d="M1.5 1.6h13v2.8h-13zM1.5 11.6h13v2.8h-13zM5.2 1.6v2.8M5.2 11.6v2.8" />
              <path d="M1 5.8h14v4.4H1z" fill="currentColor" stroke="none" />
            </Line>
          </PanelLink>
          <PanelLink $w={116} $pl={12} $gap={9}>
            Properties
            <Line w={1.1}>
              <path d="M1 4.6h7.2M12.4 4.6H15M1 11.4h2.2M7.4 11.4H15" />
              <circle cx="10.3" cy="4.6" r="2.1" /><circle cx="5.3" cy="11.4" r="2.1" />
            </Line>
          </PanelLink>
        </Toolbar>

        <Body>
          <Sidebar>
            <SideItem>
              <Line s={20} box={20} w={1.3}>
                <path d="M1.7 2.3h3.8v3.8H1.7zM14.4 8.2h3.9v3.9h-3.9zM14.4 14.4h3.9v3.9h-3.9zM5.5 4.1h4.4v12.2h4.5M9.9 10.2h4.5" />
              </Line>
            </SideItem>
            <SideItem $shift={1}><Glyph s={19} d={PIN_D} /></SideItem>
            <SideItem $shift={1}>
              <Line s={20} box={20} w={1.3}>
                <path d="M1.7 1v17.4H19M5.4 18V9.4h3V18M12.4 18V3.4h4.2V18" />
              </Line>
            </SideItem>
            <SideItem $shift={-1}>
              <Line s={20} box={20} w={1.2}>
                <path d="M6.1 1.4L2.3 5.2l12.6 12.6 3.8-3.8zM4.3 7.2l2-2M13.1 16l2-2" />
                <path d="M10 5.6l4.2-4.2 4.4 4.4-4.2 4.2M9.8 14.6l-4 4H1.6v-4.2l4-4M12 3.6l4.4 4.4" />
              </Line>
            </SideItem>
            <SideItem $shift={-2}>
              <Line s={20} box={20} w={1.3}>
                <path d="M1 16.4h7.4M1 14.4h6.4M2.2 13.6L7.4 2l3.4 6.2M4.6 8.4l4.6 1.2" />
                <circle cx="13" cy="12.6" r="5.4" />
                <path d="M11.4 10.2v4.8l4-2.4z" />
              </Line>
            </SideItem>
          </Sidebar>

          <Main>
            <FilterBar>
              <FilterSide $w={937}>
                <ScopeBox $shade><Glyph s={15} d={FILTER_D} />All tabs</ScopeBox>
                <Chip $w={138} $h={33}>
                  <ChipRow><span /><Kebab /></ChipRow>
                </Chip>
                <BarMenu $r={33}><Kebab gap={2} /></BarMenu>
              </FilterSide>
              <Splitter><SplitGrip /></Splitter>
              <FilterSide $w={927}>
                <ScopeBox><Glyph s={15} d={FILTER_D} />This tab</ScopeBox>
                <Chip $w={130} $h={56}>
                  <ChipRow><ChipTitle>Gender</ChipTitle><Kebab gap={3} /></ChipRow>
                  <ChipFooter><ChipValues>Man, Woman</ChipValues><ChipCount>2</ChipCount></ChipFooter>
                </Chip>
                <BarMenu $r={23}><Kebab gap={2} /></BarMenu>
              </FilterSide>
            </FilterBar>

            <TabBar>
              <Tab $w={206}>Current Technology Trend</Tab>
              <Tab $w={191}>Future Technology Trend</Tab>
              <Tab $w={127} $on>Demographics</Tab>
              <AddTab><Line s={12} box={12} w={1.2}><path d="M6 1.5v9M1.5 6h9" /></Line></AddTab>
            </TabBar>

            <Canvas>
              <Sheet>
                <Card>
                  <CardHead>
                    <CardTitle>Respondent by Gender</CardTitle>
                    <FunnelDotIcon /><GearIcon />
                  </CardHead>
                  <Legend>
                    <LegendTitle>Gender</LegendTitle>
                    <LegendRow>
                      <LegendItem $w={61}><Swatch $c="#fa4d56" />Woman</LegendItem>
                      <LegendItem><Swatch $c="#9f1853" />Man</LegendItem>
                    </LegendRow>
                  </Legend>
                  <PieChart />
                </Card>

                <Card>
                  <CardHead>
                    <CardTitle>Country for Country and Respondent regions</CardTitle>
                    <WarnIcon /><FunnelDotIcon /><GearIcon />
                  </CardHead>
                  <ScrollLegend>
                    <Legend>
                      <LegendTitle>Country</LegendTitle>
                      <LegendGrid>
                        {COUNTRIES.map(([name, color]) => (
                          <LegendItem key={name}><Swatch $c={color} />{name}</LegendItem>
                        ))}
                      </LegendGrid>
                    </Legend>
                    <Spacer />
                    <Track $w={17}><Arrow /><Thumb $h={52} /><Arrow $down /></Track>
                  </ScrollLegend>
                  <MapFrame>
                    <WorldMap />
                    <MapControls>
                      <MapControl $rule>
                        <Line w={1.1}><path d="M8 2L1.6 5.6 8 9.2l6.4-3.6zM1.6 7.2L3 8.6 1.6 10.2 8 14l6.4-3.8L13 8.6l1.4-1.4" /></Line>
                      </MapControl>
                      <MapControl>
                        <Line w={1.1}><circle cx="6.6" cy="6.6" r="5" /><path d="M10.3 10.3l4.5 4.5M6.6 4.4v4.4M4.4 6.6h4.4" /></Line>
                      </MapControl>
                      <MapControl>
                        <Line w={1.1}><circle cx="6.6" cy="6.6" r="5" /><path d="M10.3 10.3l4.5 4.5M4.4 6.6h4.4" /></Line>
                      </MapControl>
                      <MapControl>
                        <Line w={1.1}>
                          <path d="M2.6 1.6v3.6h3.6M2.8 5A6 6 0 0 1 8 2.2" />
                          <path d="M8 2.2a6 6 0 1 1-6 6" strokeDasharray="2.6 1.7" />
                        </Line>
                      </MapControl>
                    </MapControls>
                  </MapFrame>
                </Card>

                <Card>
                  <CardHead>
                    <CardTitle>Age by Respondent</CardTitle>
                    <WarnIcon /><FunnelDotIcon /><BulbIcon /><GearIcon />
                  </CardHead>
                  <AgeChart />
                </Card>

                <Card>
                  <CardHead>
                    <CardTitle>Respondent by Gender colored by Gender</CardTitle>
                    <FunnelDotIcon /><GearIcon />
                  </CardHead>
                  <Legend>
                    <LegendTitle>Gender</LegendTitle>
                    <LegendRow>
                      <LegendItem $w={61}><Swatch $c="#9f1853" />Man</LegendItem>
                      <LegendItem><Swatch $c="#fa4d56" />Woman</LegendItem>
                    </LegendRow>
                  </Legend>
                  <GenderChart />
                </Card>
              </Sheet>
              <Track $w={16}><Arrow /><Thumb $h={768} /><Arrow $down /></Track>
            </Canvas>
          </Main>
        </Body>
        <BottomBar />
      </Page>
    </>
  );
}
